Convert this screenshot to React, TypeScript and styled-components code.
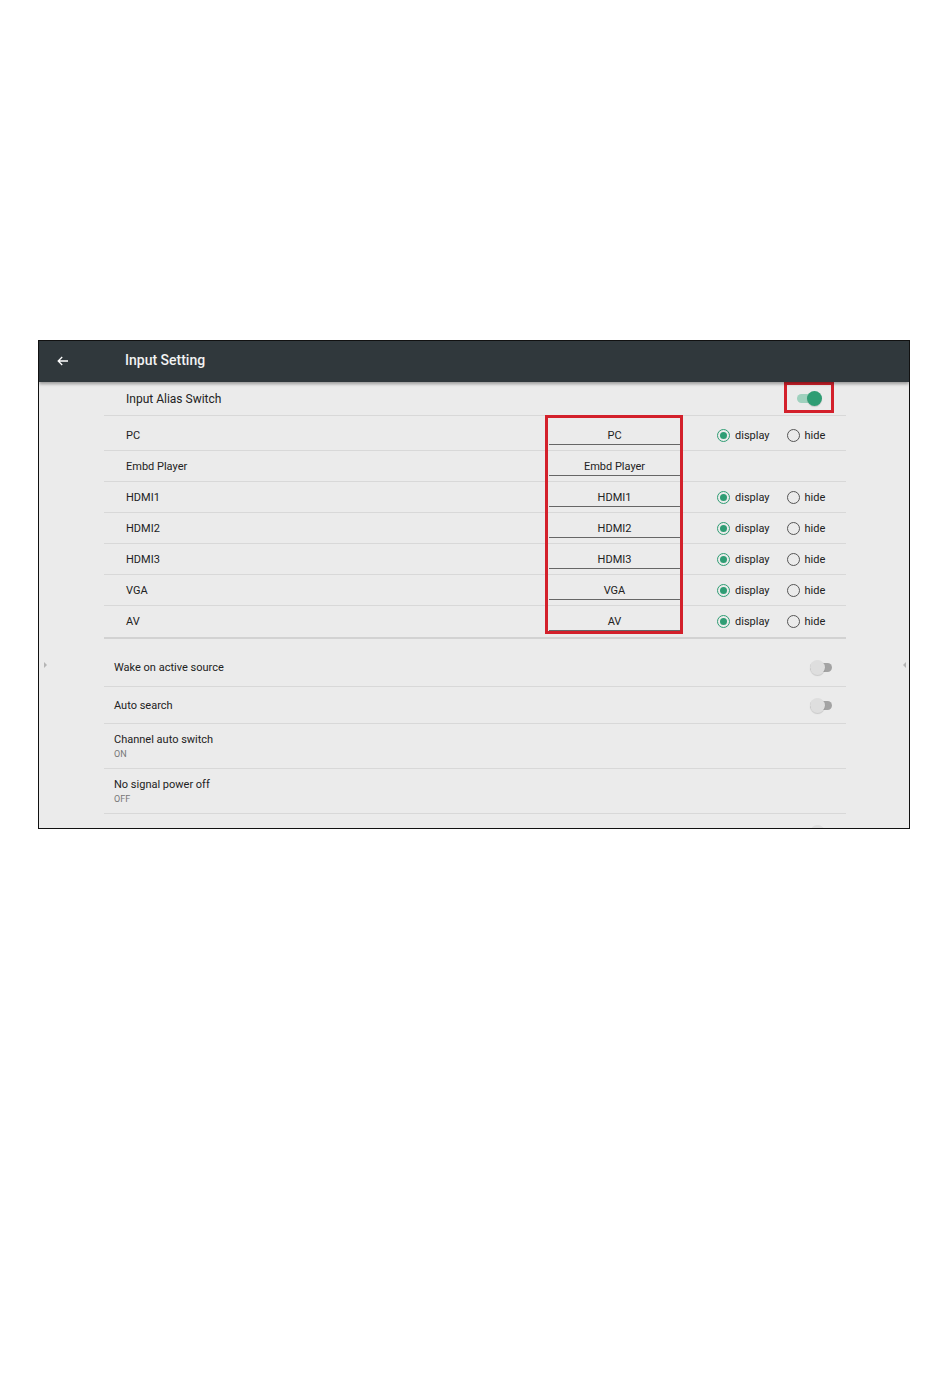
import React from 'react';
import styled, { createGlobalStyle } from 'styled-components';

const GREEN = '#2f9d74';
const LINE = '#d8d8d8';
const TEXT = '#222';

const GlobalStyle = createGlobalStyle`
    html, body {
        margin: 0;
        padding: 0;
        background: #fff;
        font-family: Roboto, "Liberation Sans", Arial, sans-serif;
    }
`;

type Source = { name: string; hasRadio: boolean };

const sources: Source[] = [
    { name: 'PC', hasRadio: true },
    { name: 'Embd Player', hasRadio: false },
    { name: 'HDMI1', hasRadio: true },
    { name: 'HDMI2', hasRadio: true },
    { name: 'HDMI3', hasRadio: true },
    { name: 'VGA', hasRadio: true },
    { name: 'AV', hasRadio: true },
];

const App = () => {
    return (
        <>
            <GlobalStyle />
            <Page>
                <Frame>
                    <Header>
                        <BackIcon width="12" height="10" viewBox="0 0 12 10">
                            <path d="M11 5H1.5M5.2 1L1.2 5l4 4" fill="none" stroke="#fff" strokeWidth="1.3" />
                        </BackIcon>
                        <Title>Input Setting</Title>
                    </Header>

                    <Content>
                        <SideArrow side="left" />
                        <SideArrow side="right" />

                        <AliasSection>
                            <AliasHeader>
                                <AliasTitle>Input Alias Switch</AliasTitle>
                                <Toggle on />
                            </AliasHeader>
                            <SourceList>
                                {sources.map((s) => (
                                    <SourceRow key={s.name}>
                                        <SourceLabel>{s.name}</SourceLabel>
                                        <AliasInput>{s.name}</AliasInput>
                                        {s.hasRadio ? (
                                            <RadioGroup>
                                                <RadioItem>
                                                    <Radio checked />
                                                    display
                                                </RadioItem>
                                                <RadioItem>
                                                    <Radio />
                                                    hide
                                                </RadioItem>
                                            </RadioGroup>
                                        ) : <span />}
                                    </SourceRow>
                                ))}
                            </SourceList>
                            <HighlightBox style={{ left: 441, top: 33, width: 138, height: 219 }} />
                            <HighlightBox style={{ left: 680, top: 0, width: 50, height: 31 }} />
                        </AliasSection>

                        <SettingList>
                            <SettingRow height={38}>
                                <SettingText>
                                    <SettingLabel>Wake on active source</SettingLabel>
                                </SettingText>
                                <Toggle />
                            </SettingRow>
                            <SettingRow height={37}>
                                <SettingText>
                                    <SettingLabel>Auto search</SettingLabel>
                                </SettingText>
                                <Toggle />
                            </SettingRow>
                            <SettingRow height={45}>
                                <SettingText>
                                    <SettingLabel>Channel auto switch</SettingLabel>
                                    <SettingValue>ON</SettingValue>
                                </SettingText>
                            </SettingRow>
                            <SettingRow height={45}>
                                <SettingText>
                                    <SettingLabel>No signal power off</SettingLabel>
                                    <SettingValue>OFF</SettingValue>
                                </SettingText>
                            </SettingRow>
                            <SettingRow height={38}>
                                <SettingText />
                                <Toggle />
                            </SettingRow>
                        </SettingList>
                    </Content>
                </Frame>
            </Page>
        </>
    );
};

export default App;

const Page = styled.div`
    width: 950px;
    height: 1387px;
    padding: 340px 0 0 38px;
    box-sizing: border-box;
`;

const Frame = styled.div`
    width: 872px;
    height: 489px;
    box-sizing: border-box;
    border: 1px solid #111;
    background: #ebebeb;
    overflow: hidden;
    display: flex;
    flex-direction: column;
`;

const Header = styled.div`
    height: 41px;
    flex-shrink: 0;
    background: #30383c;
    display: flex;
    align-items: center;
    padding-left: 18px;
    box-shadow: 0 2px 3px rgba(0, 0, 0, 0.35);
    position: relative;
    z-index: 1;
`;

const BackIcon = styled.svg`
    display: block;
    margin-top: -2px;
`;

const Title = styled.div`
    margin-left: 56px;
    color: #f2f2f2;
    font-size: 14px;
    font-weight: 500;
    margin-top: -3px;
`;

const Content = styled.div`
    position: relative;
    flex: 1;
    padding-left: 65px;
`;

const SideArrow = styled.div<{ side: 'left' | 'right' }>`
    position: absolute;
    top: 280px;
    width: 0;
    height: 0;
    border-top: 3px solid transparent;
    border-bottom: 3px solid transparent;
    ${({ side }) =>
        side === 'left'
            ? `left: 5px; border-left: 3px solid #b5b5b5;`
            : `right: 3px; border-right: 3px solid #b5b5b5;`}
`;

const AliasSection = styled.div`
    position: relative;
    width: 742px;
`;

const AliasHeader = styled.div`
    height: 33px;
    border-bottom: 1px solid ${LINE};
    display: flex;
    align-items: center;
    justify-content: space-between;
    padding: 0 27px 0 22px;
`;

const AliasTitle = styled.div`
    font-size: 12px;
    color: ${TEXT};
`;

const SourceList = styled.div`
    margin-top: 4px;
    border-bottom: 2px solid #d2d2d2;
`;

const SourceRow = styled.div`
    height: 30px;
    display: grid;
    grid-template-columns: 423px 131px 1fr;
    align-items: center;
    padding-left: 22px;
    border-bottom: 1px solid ${LINE};
    &:last-child {
        border-bottom: none;
        height: 31px;
    }
`;

const SourceLabel = styled.div`
    font-size: 11px;
    color: ${TEXT};
`;

const AliasInput = styled.div`
    height: 23px;
    margin-top: -4px;
    box-sizing: border-box;
    border-bottom: 1px solid #666;
    font-size: 11px;
    color: ${TEXT};
    display: flex;
    align-items: center;
    justify-content: center;
    padding-top: 5px;
`;

const RadioGroup = styled.div`
    display: flex;
    align-items: center;
    padding-left: 37px;
    gap: 17px;
`;

const RadioItem = styled.label`
    display: flex;
    align-items: center;
    gap: 5px;
    font-size: 11px;
    color: ${TEXT};
`;

const Radio = styled.span<{ checked?: boolean }>`
    width: 13px;
    height: 13px;
    box-sizing: border-box;
    border-radius: 50%;
    border: ${({ checked }) => (checked ? `1.5px solid ${GREEN}` : '1px solid #555')};
    display: flex;
    align-items: center;
    justify-content: center;
    &::after {
        content: '';
        width: 7px;
        height: 7px;
        border-radius: 50%;
        background: ${({ checked }) => (checked ? GREEN : 'transparent')};
    }
`;

const Toggle = styled.span<{ on?: boolean }>`
    position: relative;
    width: 22px;
    height: 9px;
    border-radius: 5px;
    flex-shrink: 0;
    background: ${({ on }) => (on ? '#9fd1be' : '#a3a3a3')};
    &::after {
        content: '';
        position: absolute;
        top: -3px;
        ${({ on }) => (on ? 'right: -3px;' : 'left: 0;')}
        width: 15px;
        height: 15px;
        border-radius: 50%;
        background: ${({ on }) => (on ? GREEN : '#dedede')};
        box-shadow: 0 1px 1px rgba(0, 0, 0, 0.15);
    }
`;

const HighlightBox = styled.div`
    position: absolute;
    box-sizing: border-box;
    border: 3px solid #d3202b;
    pointer-events: none;
`;

const SettingList = styled.div`
    width: 742px;
    margin-top: 10px;
`;

const SettingRow = styled.div<{ height: number }>`
    height: ${({ height }) => height - 1}px;
    display: flex;
    align-items: center;
    justify-content: space-between;
    padding: 0 14px 0 10px;
    border-bottom: 1px solid ${LINE};
`;

const SettingText = styled.div`
    display: flex;
    flex-direction: column;
    gap: 3px;
`;

const SettingLabel = styled.div`
    font-size: 11px;
    color: ${TEXT};
`;

const SettingValue = styled.div`
    font-size: 9px;
    color: #777;
`;
